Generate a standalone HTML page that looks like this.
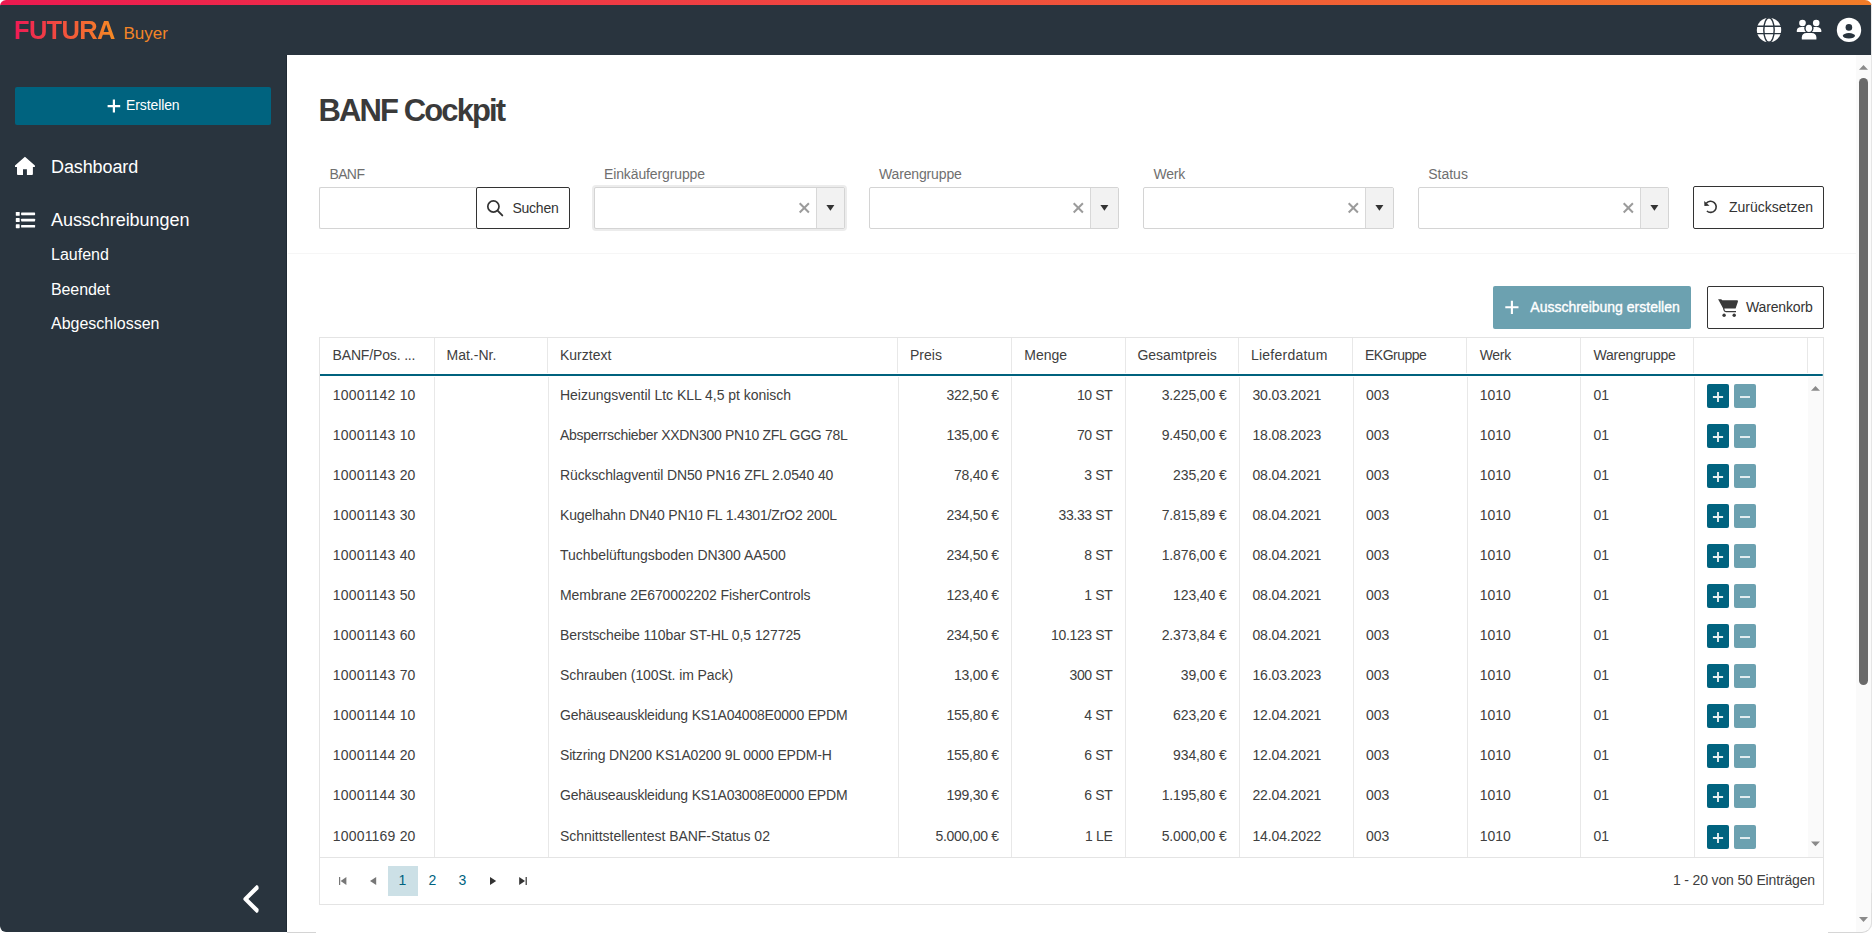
<!DOCTYPE html>
<html><head><meta charset="utf-8">
<style>
*{box-sizing:border-box;margin:0;padding:0}
html,body{width:1872px;height:933px;overflow:hidden;background:#fff;font-family:"Liberation Sans",sans-serif;color:#333}
#frame{position:absolute;left:0;top:0;width:1872px;height:933px;overflow:hidden;border-radius:6px 7px 10px 6px;background:#fff}
.t{position:absolute;white-space:nowrap}
.r{position:absolute}
svg{position:absolute;left:0;top:0;overflow:visible}
</style></head><body>
<div id="frame">
<div class="r" style="left:0;top:0;width:1872px;height:5px;background:linear-gradient(90deg,#ec1a50 0%,#ef4c3e 50%,#f17c28 100%)"></div>
<div class="r" style="left:0;top:5px;width:1871px;height:50px;background:#29343e"></div>
<div class="r" style="left:0;top:55px;width:287px;height:877px;background:#29343e;border-bottom-left-radius:6px"></div>
<div class="r" style="left:286px;top:55px;width:1px;height:877px;background:#1f2a34"></div>
<div class="t" style="left:14.00px;top:18.01px;font-size:25.5px;line-height:25.5px;color:transparent;font-weight:700;letter-spacing:-0.7px;background:linear-gradient(90deg,#ee1a55,#f68b24);-webkit-background-clip:text;background-clip:text;">FUTURA</div>
<div class="t" style="left:123.50px;top:25.21px;font-size:17px;line-height:17px;color:#f38527;">Buyer</div>
<div class="r" style="left:15px;top:87px;width:256px;height:38px;background:#00637f;border-radius:2px"></div>
<svg width="1872" height="933"><path d="M107.6 106.1H120.2M113.9 99.6V112.6" stroke="#fff" stroke-width="2.2"/></svg>
<div class="t" style="left:126.10px;top:98.25px;font-size:14px;line-height:14px;color:#fff;letter-spacing:-0.12px;">Erstellen</div>
<svg width="1872" height="933"><path d="M24.95 156.7L34.9 165.6V167.1H32.9V174Q32.9 174.9 32 174.9H26.9V169.3H23V174.9H17.9Q17 174.9 17 174V167.1H15V165.6Z" fill="#fff"/><rect x="15.8" y="211.9" width="3.9" height="3.9" rx="0.6" fill="#fff"/><rect x="15.8" y="218.1" width="3.9" height="3.9" rx="0.6" fill="#fff"/><rect x="15.8" y="224.3" width="3.9" height="3.9" rx="0.6" fill="#fff"/><rect x="21.1" y="212.5" width="14" height="2.7" rx="0.6" fill="#fff"/><rect x="21.1" y="218.7" width="14" height="2.7" rx="0.6" fill="#fff"/><rect x="21.1" y="224.9" width="14" height="2.7" rx="0.6" fill="#fff"/><path d="M256.6 884.9Q258.6 885.2 258.6 887.2V888.9L248.4 899L258.6 909.1V910.8Q258.6 912.8 256.6 913.1L243.8 900.3Q242.8 899 243.8 897.7Z" fill="#fff"/></svg>
<div class="t" style="left:51.00px;top:157.56px;font-size:18px;line-height:18px;color:#fff;letter-spacing:-0.1px;">Dashboard</div>
<div class="t" style="left:51.00px;top:210.66px;font-size:18px;line-height:18px;color:#fff;letter-spacing:-0.05px;">Ausschreibungen</div>
<div class="t" style="left:51.00px;top:247.46px;font-size:16px;line-height:16px;color:#fff;">Laufend</div>
<div class="t" style="left:51.00px;top:282.46px;font-size:16px;line-height:16px;color:#fff;letter-spacing:-0.1px;">Beendet</div>
<div class="t" style="left:51.00px;top:316.46px;font-size:16px;line-height:16px;color:#fff;">Abgeschlossen</div>
<svg width="1872" height="933"><circle cx="1769" cy="30" r="12.2" fill="#fff"/><path d="M1756 26.2H1782M1756 33.6H1782" stroke="#29343e" stroke-width="1.4"/><ellipse cx="1769" cy="30" rx="5.2" ry="12.3" fill="none" stroke="#29343e" stroke-width="1.4"/><circle cx="1802.5" cy="23" r="3.3" fill="#fff"/><circle cx="1816.2" cy="23" r="3.3" fill="#fff"/><path d="M1796.8 32V30.5Q1797 27 1801.5 27H1803.5Q1808 27 1808.2 30.5V32Z" fill="#fff"/><path d="M1809.8 32V30.5Q1810 27 1814.5 27H1816.5Q1821 27 1821.3 30.5V32Z" fill="#fff"/><ellipse cx="1808.9" cy="28.3" rx="4.6" ry="5" fill="#29343e"/><ellipse cx="1808.9" cy="28.3" rx="3.2" ry="3.6" fill="#fff"/><path d="M1801.8 39.4V37.5Q1802 32.9 1806.5 32.9H1811.5Q1816.2 32.9 1816.4 37.5V39.4Z" fill="#fff" stroke="#29343e" stroke-width="0"/><circle cx="1849" cy="29.9" r="12.2" fill="#fff"/><circle cx="1848.9" cy="27.4" r="3.3" fill="#29343e"/><ellipse cx="1848.9" cy="35.8" rx="6.1" ry="2.7" fill="#29343e"/></svg>
<div class="r" style="left:1856px;top:55px;width:15px;height:878px;background:#fafafa"></div>
<div class="r" style="left:1859px;top:78px;width:9px;height:607px;background:#6a6a6a;border-radius:4.5px"></div>
<svg width="1872" height="933"><path d="M1859 69.8L1863.5 65L1868 69.8Z" fill="#8a8a8a"/><path d="M1859 917L1863.5 921.9L1868 917Z" fill="#8a8a8a"/></svg>
<div class="r" style="left:1871px;top:0;width:1px;height:933px;background:#e6e6e6"></div>
<div class="t" style="left:318.60px;top:94.61px;font-size:31px;line-height:31px;color:#3a3a3a;font-weight:700;letter-spacing:-1.9px;">BANF Cockpit</div>
<div class="t" style="left:329.40px;top:167.05px;font-size:14px;line-height:14px;color:#6f6f6f;letter-spacing:-0.6px;">BANF</div>
<div class="t" style="left:604.00px;top:167.05px;font-size:14px;line-height:14px;color:#6f6f6f;letter-spacing:-0.12px;">Einkäufergruppe</div>
<div class="t" style="left:879.00px;top:167.05px;font-size:14px;line-height:14px;color:#6f6f6f;letter-spacing:-0.15px;">Warengruppe</div>
<div class="t" style="left:1153.50px;top:167.05px;font-size:14px;line-height:14px;color:#6f6f6f;letter-spacing:-0.2px;">Werk</div>
<div class="t" style="left:1428.20px;top:167.05px;font-size:14px;line-height:14px;color:#6f6f6f;">Status</div>
<div class="r" style="left:319px;top:187px;width:158px;height:42px;border:1px solid #d4d4d4;border-right:none;border-radius:2px 0 0 2px;background:#fff"></div>
<div class="r" style="left:476px;top:187px;width:94px;height:42px;border:1px solid #333;border-radius:2px;background:#fff"></div>
<svg width="1872" height="933"><circle cx="493.4" cy="206.5" r="5.6" fill="none" stroke="#333" stroke-width="1.7"/><path d="M497.6 210.7L502.3 215.4" stroke="#333" stroke-width="1.9" stroke-linecap="round"/></svg>
<div class="t" style="left:512.50px;top:200.95px;font-size:14px;line-height:14px;color:#333;letter-spacing:-0.25px;">Suchen</div>
<div class="r" style="left:594px;top:187px;width:251px;height:42px;border:1px solid #d4d4d4;border-radius:2px;background:#fff;box-shadow:0 0 0 2px #ececec;"></div>
<div class="r" style="left:816px;top:188px;width:28px;height:40px;background:#f2f2f2;border-left:1px solid #d8d8d8"></div>
<svg width="1872" height="933"><path d="M799.6999999999999 203.3L808.9 212.5M808.9 203.3L799.6999999999999 212.5" stroke="#9b9b9b" stroke-width="2"/><path d="M826.4 205L834.4 205L830.4 210.7Z" fill="#333"/></svg>
<div class="r" style="left:869px;top:187px;width:250px;height:42px;border:1px solid #d4d4d4;border-radius:2px;background:#fff;"></div>
<div class="r" style="left:1090px;top:188px;width:28px;height:40px;background:#f2f2f2;border-left:1px solid #d8d8d8"></div>
<svg width="1872" height="933"><path d="M1073.7 203.3L1082.8999999999999 212.5M1082.8999999999999 203.3L1073.7 212.5" stroke="#9b9b9b" stroke-width="2"/><path d="M1100.4 205L1108.4 205L1104.4 210.7Z" fill="#333"/></svg>
<div class="r" style="left:1143px;top:187px;width:251px;height:42px;border:1px solid #d4d4d4;border-radius:2px;background:#fff;"></div>
<div class="r" style="left:1365px;top:188px;width:28px;height:40px;background:#f2f2f2;border-left:1px solid #d8d8d8"></div>
<svg width="1872" height="933"><path d="M1348.7 203.3L1357.8999999999999 212.5M1357.8999999999999 203.3L1348.7 212.5" stroke="#9b9b9b" stroke-width="2"/><path d="M1375.4 205L1383.4 205L1379.4 210.7Z" fill="#333"/></svg>
<div class="r" style="left:1418px;top:187px;width:251px;height:42px;border:1px solid #d4d4d4;border-radius:2px;background:#fff;"></div>
<div class="r" style="left:1640px;top:188px;width:28px;height:40px;background:#f2f2f2;border-left:1px solid #d8d8d8"></div>
<svg width="1872" height="933"><path d="M1623.7 203.3L1632.8999999999999 212.5M1632.8999999999999 203.3L1623.7 212.5" stroke="#9b9b9b" stroke-width="2"/><path d="M1650.4 205L1658.4 205L1654.4 210.7Z" fill="#333"/></svg>
<div class="r" style="left:1693px;top:186px;width:131px;height:43px;border:1px solid #333;border-radius:2px;background:#fff"></div>
<svg width="1872" height="933"><path d="M1706.3 203.2A5.6 5.6 0 1 1 1706.9 211" fill="none" stroke="#333" stroke-width="1.6"/><path d="M1704.2 200.9L1704.4 206L1709.5 205.7Z" fill="#333"/></svg>
<div class="t" style="left:1729.00px;top:199.75px;font-size:14px;line-height:14px;color:#333;">Zurücksetzen</div>
<div class="r" style="left:288px;top:253px;width:1568px;height:1px;background:#f6f6f6"></div>
<div class="r" style="left:1493px;top:286px;width:198px;height:43px;background:#6ca1b0;border-radius:2px"></div>
<svg width="1872" height="933"><path d="M1505.3 307.3H1518.5M1511.9 300.7V313.9" stroke="#fff" stroke-width="2.1"/></svg>
<div class="t" style="left:1530.30px;top:300.45px;font-size:14px;line-height:14px;color:#fff;-webkit-text-stroke:0.35px #fff;">Ausschreibung erstellen</div>
<div class="r" style="left:1707px;top:286px;width:117px;height:43px;border:1px solid #333;border-radius:2px;background:#fff"></div>
<svg width="1872" height="933"><path d="M1718.1 299.2H1721.2L1722.3 300.2H1737.2Q1738.4 300.5 1737.9 301.8L1735.6 308.6H1723.2Z" fill="#3a3a3a"/><path d="M1722.6 301L1724 310Q1724.3 311.6 1726 311.6H1736" fill="none" stroke="#3a3a3a" stroke-width="1.3"/><circle cx="1724.1" cy="315.2" r="1.7" fill="#3a3a3a"/><circle cx="1734.2" cy="315.2" r="1.7" fill="#3a3a3a"/></svg>
<div class="t" style="left:1746.00px;top:299.95px;font-size:14px;line-height:14px;color:#333;letter-spacing:-0.15px;">Warenkorb</div>
<div class="r" style="left:319px;top:337px;width:1505px;height:568px;border:1px solid #e4e4e4;background:#fff"></div>
<div class="r" style="left:1808px;top:377px;width:15px;height:480px;background:#fafafa"></div>
<div class="r" style="left:434px;top:338px;width:1px;height:35px;background:#e8e8e8"></div>
<div class="r" style="left:547px;top:338px;width:1px;height:35px;background:#e8e8e8"></div>
<div class="r" style="left:897px;top:338px;width:1px;height:35px;background:#e8e8e8"></div>
<div class="r" style="left:1011px;top:338px;width:1px;height:35px;background:#e8e8e8"></div>
<div class="r" style="left:1125px;top:338px;width:1px;height:35px;background:#e8e8e8"></div>
<div class="r" style="left:1238px;top:338px;width:1px;height:35px;background:#e8e8e8"></div>
<div class="r" style="left:1352px;top:338px;width:1px;height:35px;background:#e8e8e8"></div>
<div class="r" style="left:1466px;top:338px;width:1px;height:35px;background:#e8e8e8"></div>
<div class="r" style="left:1580px;top:338px;width:1px;height:35px;background:#e8e8e8"></div>
<div class="r" style="left:1693px;top:338px;width:1px;height:35px;background:#e8e8e8"></div>
<div class="r" style="left:1807px;top:338px;width:1px;height:35px;background:#e8e8e8"></div>
<div class="r" style="left:434px;top:377px;width:1px;height:480px;background:#e8e8e8"></div>
<div class="r" style="left:548px;top:377px;width:1px;height:480px;background:#e8e8e8"></div>
<div class="r" style="left:898px;top:377px;width:1px;height:480px;background:#e8e8e8"></div>
<div class="r" style="left:1011px;top:377px;width:1px;height:480px;background:#e8e8e8"></div>
<div class="r" style="left:1125px;top:377px;width:1px;height:480px;background:#e8e8e8"></div>
<div class="r" style="left:1239px;top:377px;width:1px;height:480px;background:#e8e8e8"></div>
<div class="r" style="left:1353px;top:377px;width:1px;height:480px;background:#e8e8e8"></div>
<div class="r" style="left:1467px;top:377px;width:1px;height:480px;background:#e8e8e8"></div>
<div class="r" style="left:1580px;top:377px;width:1px;height:480px;background:#e8e8e8"></div>
<div class="r" style="left:1694px;top:377px;width:1px;height:480px;background:#e8e8e8"></div>
<div class="r" style="left:320px;top:374px;width:1503px;height:2px;background:#00627e;border-radius:0 1px 1px 0"></div>
<div class="r" style="left:320px;top:857px;width:1503px;height:1px;background:#e4e4e4"></div>
<div class="t" style="left:332.50px;top:348.45px;font-size:14px;line-height:14px;color:#404040;letter-spacing:-0.15px;">BANF/Pos. ...</div>
<div class="t" style="left:446.50px;top:348.45px;font-size:14px;line-height:14px;color:#404040;">Mat.-Nr.</div>
<div class="t" style="left:560.00px;top:348.45px;font-size:14px;line-height:14px;color:#404040;">Kurztext</div>
<div class="t" style="left:910.00px;top:348.45px;font-size:14px;line-height:14px;color:#404040;">Preis</div>
<div class="t" style="left:1024.30px;top:348.45px;font-size:14px;line-height:14px;color:#404040;">Menge</div>
<div class="t" style="left:1137.40px;top:348.45px;font-size:14px;line-height:14px;color:#404040;">Gesamtpreis</div>
<div class="t" style="left:1250.90px;top:348.45px;font-size:14px;line-height:14px;color:#404040;letter-spacing:0.25px;">Lieferdatum</div>
<div class="t" style="left:1365.00px;top:348.45px;font-size:14px;line-height:14px;color:#404040;letter-spacing:-0.5px;">EKGruppe</div>
<div class="t" style="left:1479.70px;top:348.45px;font-size:14px;line-height:14px;color:#404040;letter-spacing:-0.3px;">Werk</div>
<div class="t" style="left:1593.40px;top:348.45px;font-size:14px;line-height:14px;color:#404040;letter-spacing:-0.18px;">Warengruppe</div>
<div class="t" style="left:332.70px;top:388.15px;font-size:14px;line-height:14px;color:#404040;letter-spacing:0.2px;">10001142 10</div>
<div class="t" style="left:560.00px;top:388.15px;font-size:14px;line-height:14px;color:#404040;letter-spacing:-0.03px;">Heizungsventil Ltc KLL 4,5 pt konisch</div>
<div class="t" style="right:873.30px;top:388.15px;font-size:14px;line-height:14px;color:#404040;letter-spacing:-0.3px;">322,50 €</div>
<div class="t" style="right:759.50px;top:388.15px;font-size:14px;line-height:14px;color:#404040;letter-spacing:-0.35px;">10 ST</div>
<div class="t" style="right:645.40px;top:388.15px;font-size:14px;line-height:14px;color:#404040;letter-spacing:-0.12px;">3.225,00 €</div>
<div class="t" style="left:1252.40px;top:388.15px;font-size:14px;line-height:14px;color:#404040;letter-spacing:-0.12px;">30.03.2021</div>
<div class="t" style="left:1366.00px;top:388.15px;font-size:14px;line-height:14px;color:#404040;">003</div>
<div class="t" style="left:1479.70px;top:388.15px;font-size:14px;line-height:14px;color:#404040;">1010</div>
<div class="t" style="left:1593.40px;top:388.15px;font-size:14px;line-height:14px;color:#404040;">01</div>
<div class="r" style="left:1707px;top:384px;width:22px;height:23.5px;background:#00637f;border-radius:2px"></div>
<div class="r" style="left:1734px;top:384px;width:22px;height:23.5px;background:#6ca1b0;border-radius:2px"></div>
<svg width="1872" height="933"><path d="M1712.9 397H1723.1M1718 392.1V401.9" stroke="#e8f0f2" stroke-width="1.9"/><path d="M1740 397H1750" stroke="#e8f0f2" stroke-width="1.9"/></svg>
<div class="t" style="left:332.70px;top:428.15px;font-size:14px;line-height:14px;color:#404040;letter-spacing:0.2px;">10001143 10</div>
<div class="t" style="left:560.00px;top:428.15px;font-size:14px;line-height:14px;color:#404040;letter-spacing:-0.29000000000000004px;">Absperrschieber XXDN300 PN10 ZFL GGG 78L</div>
<div class="t" style="right:873.30px;top:428.15px;font-size:14px;line-height:14px;color:#404040;letter-spacing:-0.3px;">135,00 €</div>
<div class="t" style="right:759.50px;top:428.15px;font-size:14px;line-height:14px;color:#404040;letter-spacing:-0.35px;">70 ST</div>
<div class="t" style="right:645.40px;top:428.15px;font-size:14px;line-height:14px;color:#404040;letter-spacing:-0.12px;">9.450,00 €</div>
<div class="t" style="left:1252.40px;top:428.15px;font-size:14px;line-height:14px;color:#404040;letter-spacing:-0.12px;">18.08.2023</div>
<div class="t" style="left:1366.00px;top:428.15px;font-size:14px;line-height:14px;color:#404040;">003</div>
<div class="t" style="left:1479.70px;top:428.15px;font-size:14px;line-height:14px;color:#404040;">1010</div>
<div class="t" style="left:1593.40px;top:428.15px;font-size:14px;line-height:14px;color:#404040;">01</div>
<div class="r" style="left:1707px;top:424px;width:22px;height:23.5px;background:#00637f;border-radius:2px"></div>
<div class="r" style="left:1734px;top:424px;width:22px;height:23.5px;background:#6ca1b0;border-radius:2px"></div>
<svg width="1872" height="933"><path d="M1712.9 437H1723.1M1718 432.1V441.9" stroke="#e8f0f2" stroke-width="1.9"/><path d="M1740 437H1750" stroke="#e8f0f2" stroke-width="1.9"/></svg>
<div class="t" style="left:332.70px;top:468.15px;font-size:14px;line-height:14px;color:#404040;letter-spacing:0.2px;">10001143 20</div>
<div class="t" style="left:560.00px;top:468.15px;font-size:14px;line-height:14px;color:#404040;letter-spacing:-0.12px;">Rückschlagventil DN50 PN16 ZFL 2.0540 40</div>
<div class="t" style="right:873.30px;top:468.15px;font-size:14px;line-height:14px;color:#404040;letter-spacing:-0.3px;">78,40 €</div>
<div class="t" style="right:759.50px;top:468.15px;font-size:14px;line-height:14px;color:#404040;letter-spacing:-0.35px;">3 ST</div>
<div class="t" style="right:645.40px;top:468.15px;font-size:14px;line-height:14px;color:#404040;letter-spacing:-0.12px;">235,20 €</div>
<div class="t" style="left:1252.40px;top:468.15px;font-size:14px;line-height:14px;color:#404040;letter-spacing:-0.12px;">08.04.2021</div>
<div class="t" style="left:1366.00px;top:468.15px;font-size:14px;line-height:14px;color:#404040;">003</div>
<div class="t" style="left:1479.70px;top:468.15px;font-size:14px;line-height:14px;color:#404040;">1010</div>
<div class="t" style="left:1593.40px;top:468.15px;font-size:14px;line-height:14px;color:#404040;">01</div>
<div class="r" style="left:1707px;top:464px;width:22px;height:23.5px;background:#00637f;border-radius:2px"></div>
<div class="r" style="left:1734px;top:464px;width:22px;height:23.5px;background:#6ca1b0;border-radius:2px"></div>
<svg width="1872" height="933"><path d="M1712.9 477H1723.1M1718 472.1V481.9" stroke="#e8f0f2" stroke-width="1.9"/><path d="M1740 477H1750" stroke="#e8f0f2" stroke-width="1.9"/></svg>
<div class="t" style="left:332.70px;top:508.15px;font-size:14px;line-height:14px;color:#404040;letter-spacing:0.2px;">10001143 30</div>
<div class="t" style="left:560.00px;top:508.15px;font-size:14px;line-height:14px;color:#404040;letter-spacing:-0.15px;">Kugelhahn DN40 PN10 FL 1.4301/ZrO2 200L</div>
<div class="t" style="right:873.30px;top:508.15px;font-size:14px;line-height:14px;color:#404040;letter-spacing:-0.3px;">234,50 €</div>
<div class="t" style="right:759.50px;top:508.15px;font-size:14px;line-height:14px;color:#404040;letter-spacing:-0.35px;">33.33 ST</div>
<div class="t" style="right:645.40px;top:508.15px;font-size:14px;line-height:14px;color:#404040;letter-spacing:-0.12px;">7.815,89 €</div>
<div class="t" style="left:1252.40px;top:508.15px;font-size:14px;line-height:14px;color:#404040;letter-spacing:-0.12px;">08.04.2021</div>
<div class="t" style="left:1366.00px;top:508.15px;font-size:14px;line-height:14px;color:#404040;">003</div>
<div class="t" style="left:1479.70px;top:508.15px;font-size:14px;line-height:14px;color:#404040;">1010</div>
<div class="t" style="left:1593.40px;top:508.15px;font-size:14px;line-height:14px;color:#404040;">01</div>
<div class="r" style="left:1707px;top:504px;width:22px;height:23.5px;background:#00637f;border-radius:2px"></div>
<div class="r" style="left:1734px;top:504px;width:22px;height:23.5px;background:#6ca1b0;border-radius:2px"></div>
<svg width="1872" height="933"><path d="M1712.9 517H1723.1M1718 512.1V521.9" stroke="#e8f0f2" stroke-width="1.9"/><path d="M1740 517H1750" stroke="#e8f0f2" stroke-width="1.9"/></svg>
<div class="t" style="left:332.70px;top:548.15px;font-size:14px;line-height:14px;color:#404040;letter-spacing:0.2px;">10001143 40</div>
<div class="t" style="left:560.00px;top:548.15px;font-size:14px;line-height:14px;color:#404040;letter-spacing:-0.03px;">Tuchbelüftungsboden DN300 AA500</div>
<div class="t" style="right:873.30px;top:548.15px;font-size:14px;line-height:14px;color:#404040;letter-spacing:-0.3px;">234,50 €</div>
<div class="t" style="right:759.50px;top:548.15px;font-size:14px;line-height:14px;color:#404040;letter-spacing:-0.35px;">8 ST</div>
<div class="t" style="right:645.40px;top:548.15px;font-size:14px;line-height:14px;color:#404040;letter-spacing:-0.12px;">1.876,00 €</div>
<div class="t" style="left:1252.40px;top:548.15px;font-size:14px;line-height:14px;color:#404040;letter-spacing:-0.12px;">08.04.2021</div>
<div class="t" style="left:1366.00px;top:548.15px;font-size:14px;line-height:14px;color:#404040;">003</div>
<div class="t" style="left:1479.70px;top:548.15px;font-size:14px;line-height:14px;color:#404040;">1010</div>
<div class="t" style="left:1593.40px;top:548.15px;font-size:14px;line-height:14px;color:#404040;">01</div>
<div class="r" style="left:1707px;top:544px;width:22px;height:23.5px;background:#00637f;border-radius:2px"></div>
<div class="r" style="left:1734px;top:544px;width:22px;height:23.5px;background:#6ca1b0;border-radius:2px"></div>
<svg width="1872" height="933"><path d="M1712.9 557H1723.1M1718 552.1V561.9" stroke="#e8f0f2" stroke-width="1.9"/><path d="M1740 557H1750" stroke="#e8f0f2" stroke-width="1.9"/></svg>
<div class="t" style="left:332.70px;top:588.15px;font-size:14px;line-height:14px;color:#404040;letter-spacing:0.2px;">10001143 50</div>
<div class="t" style="left:560.00px;top:588.15px;font-size:14px;line-height:14px;color:#404040;letter-spacing:-0.07px;">Membrane 2E670002202 FisherControls</div>
<div class="t" style="right:873.30px;top:588.15px;font-size:14px;line-height:14px;color:#404040;letter-spacing:-0.3px;">123,40 €</div>
<div class="t" style="right:759.50px;top:588.15px;font-size:14px;line-height:14px;color:#404040;letter-spacing:-0.35px;">1 ST</div>
<div class="t" style="right:645.40px;top:588.15px;font-size:14px;line-height:14px;color:#404040;letter-spacing:-0.12px;">123,40 €</div>
<div class="t" style="left:1252.40px;top:588.15px;font-size:14px;line-height:14px;color:#404040;letter-spacing:-0.12px;">08.04.2021</div>
<div class="t" style="left:1366.00px;top:588.15px;font-size:14px;line-height:14px;color:#404040;">003</div>
<div class="t" style="left:1479.70px;top:588.15px;font-size:14px;line-height:14px;color:#404040;">1010</div>
<div class="t" style="left:1593.40px;top:588.15px;font-size:14px;line-height:14px;color:#404040;">01</div>
<div class="r" style="left:1707px;top:584px;width:22px;height:23.5px;background:#00637f;border-radius:2px"></div>
<div class="r" style="left:1734px;top:584px;width:22px;height:23.5px;background:#6ca1b0;border-radius:2px"></div>
<svg width="1872" height="933"><path d="M1712.9 597H1723.1M1718 592.1V601.9" stroke="#e8f0f2" stroke-width="1.9"/><path d="M1740 597H1750" stroke="#e8f0f2" stroke-width="1.9"/></svg>
<div class="t" style="left:332.70px;top:628.15px;font-size:14px;line-height:14px;color:#404040;letter-spacing:0.2px;">10001143 60</div>
<div class="t" style="left:560.00px;top:628.15px;font-size:14px;line-height:14px;color:#404040;letter-spacing:-0.1px;">Berstscheibe 110bar ST-HL 0,5 127725</div>
<div class="t" style="right:873.30px;top:628.15px;font-size:14px;line-height:14px;color:#404040;letter-spacing:-0.3px;">234,50 €</div>
<div class="t" style="right:759.50px;top:628.15px;font-size:14px;line-height:14px;color:#404040;letter-spacing:-0.35px;">10.123 ST</div>
<div class="t" style="right:645.40px;top:628.15px;font-size:14px;line-height:14px;color:#404040;letter-spacing:-0.12px;">2.373,84 €</div>
<div class="t" style="left:1252.40px;top:628.15px;font-size:14px;line-height:14px;color:#404040;letter-spacing:-0.12px;">08.04.2021</div>
<div class="t" style="left:1366.00px;top:628.15px;font-size:14px;line-height:14px;color:#404040;">003</div>
<div class="t" style="left:1479.70px;top:628.15px;font-size:14px;line-height:14px;color:#404040;">1010</div>
<div class="t" style="left:1593.40px;top:628.15px;font-size:14px;line-height:14px;color:#404040;">01</div>
<div class="r" style="left:1707px;top:624px;width:22px;height:23.5px;background:#00637f;border-radius:2px"></div>
<div class="r" style="left:1734px;top:624px;width:22px;height:23.5px;background:#6ca1b0;border-radius:2px"></div>
<svg width="1872" height="933"><path d="M1712.9 637H1723.1M1718 632.1V641.9" stroke="#e8f0f2" stroke-width="1.9"/><path d="M1740 637H1750" stroke="#e8f0f2" stroke-width="1.9"/></svg>
<div class="t" style="left:332.70px;top:668.15px;font-size:14px;line-height:14px;color:#404040;letter-spacing:0.2px;">10001143 70</div>
<div class="t" style="left:560.00px;top:668.15px;font-size:14px;line-height:14px;color:#404040;letter-spacing:-0.08px;">Schrauben (100St. im Pack)</div>
<div class="t" style="right:873.30px;top:668.15px;font-size:14px;line-height:14px;color:#404040;letter-spacing:-0.3px;">13,00 €</div>
<div class="t" style="right:759.50px;top:668.15px;font-size:14px;line-height:14px;color:#404040;letter-spacing:-0.35px;">300 ST</div>
<div class="t" style="right:645.40px;top:668.15px;font-size:14px;line-height:14px;color:#404040;letter-spacing:-0.12px;">39,00 €</div>
<div class="t" style="left:1252.40px;top:668.15px;font-size:14px;line-height:14px;color:#404040;letter-spacing:-0.12px;">16.03.2023</div>
<div class="t" style="left:1366.00px;top:668.15px;font-size:14px;line-height:14px;color:#404040;">003</div>
<div class="t" style="left:1479.70px;top:668.15px;font-size:14px;line-height:14px;color:#404040;">1010</div>
<div class="t" style="left:1593.40px;top:668.15px;font-size:14px;line-height:14px;color:#404040;">01</div>
<div class="r" style="left:1707px;top:664px;width:22px;height:23.5px;background:#00637f;border-radius:2px"></div>
<div class="r" style="left:1734px;top:664px;width:22px;height:23.5px;background:#6ca1b0;border-radius:2px"></div>
<svg width="1872" height="933"><path d="M1712.9 677H1723.1M1718 672.1V681.9" stroke="#e8f0f2" stroke-width="1.9"/><path d="M1740 677H1750" stroke="#e8f0f2" stroke-width="1.9"/></svg>
<div class="t" style="left:332.70px;top:708.15px;font-size:14px;line-height:14px;color:#404040;letter-spacing:0.2px;">10001144 10</div>
<div class="t" style="left:560.00px;top:708.15px;font-size:14px;line-height:14px;color:#404040;letter-spacing:-0.2px;">Gehäuseauskleidung KS1A04008E0000 EPDM</div>
<div class="t" style="right:873.30px;top:708.15px;font-size:14px;line-height:14px;color:#404040;letter-spacing:-0.3px;">155,80 €</div>
<div class="t" style="right:759.50px;top:708.15px;font-size:14px;line-height:14px;color:#404040;letter-spacing:-0.35px;">4 ST</div>
<div class="t" style="right:645.40px;top:708.15px;font-size:14px;line-height:14px;color:#404040;letter-spacing:-0.12px;">623,20 €</div>
<div class="t" style="left:1252.40px;top:708.15px;font-size:14px;line-height:14px;color:#404040;letter-spacing:-0.12px;">12.04.2021</div>
<div class="t" style="left:1366.00px;top:708.15px;font-size:14px;line-height:14px;color:#404040;">003</div>
<div class="t" style="left:1479.70px;top:708.15px;font-size:14px;line-height:14px;color:#404040;">1010</div>
<div class="t" style="left:1593.40px;top:708.15px;font-size:14px;line-height:14px;color:#404040;">01</div>
<div class="r" style="left:1707px;top:704px;width:22px;height:23.5px;background:#00637f;border-radius:2px"></div>
<div class="r" style="left:1734px;top:704px;width:22px;height:23.5px;background:#6ca1b0;border-radius:2px"></div>
<svg width="1872" height="933"><path d="M1712.9 717H1723.1M1718 712.1V721.9" stroke="#e8f0f2" stroke-width="1.9"/><path d="M1740 717H1750" stroke="#e8f0f2" stroke-width="1.9"/></svg>
<div class="t" style="left:332.70px;top:748.15px;font-size:14px;line-height:14px;color:#404040;letter-spacing:0.2px;">10001144 20</div>
<div class="t" style="left:560.00px;top:748.15px;font-size:14px;line-height:14px;color:#404040;letter-spacing:-0.17px;">Sitzring DN200 KS1A0200 9L 0000 EPDM-H</div>
<div class="t" style="right:873.30px;top:748.15px;font-size:14px;line-height:14px;color:#404040;letter-spacing:-0.3px;">155,80 €</div>
<div class="t" style="right:759.50px;top:748.15px;font-size:14px;line-height:14px;color:#404040;letter-spacing:-0.35px;">6 ST</div>
<div class="t" style="right:645.40px;top:748.15px;font-size:14px;line-height:14px;color:#404040;letter-spacing:-0.12px;">934,80 €</div>
<div class="t" style="left:1252.40px;top:748.15px;font-size:14px;line-height:14px;color:#404040;letter-spacing:-0.12px;">12.04.2021</div>
<div class="t" style="left:1366.00px;top:748.15px;font-size:14px;line-height:14px;color:#404040;">003</div>
<div class="t" style="left:1479.70px;top:748.15px;font-size:14px;line-height:14px;color:#404040;">1010</div>
<div class="t" style="left:1593.40px;top:748.15px;font-size:14px;line-height:14px;color:#404040;">01</div>
<div class="r" style="left:1707px;top:744px;width:22px;height:23.5px;background:#00637f;border-radius:2px"></div>
<div class="r" style="left:1734px;top:744px;width:22px;height:23.5px;background:#6ca1b0;border-radius:2px"></div>
<svg width="1872" height="933"><path d="M1712.9 757H1723.1M1718 752.1V761.9" stroke="#e8f0f2" stroke-width="1.9"/><path d="M1740 757H1750" stroke="#e8f0f2" stroke-width="1.9"/></svg>
<div class="t" style="left:332.70px;top:788.15px;font-size:14px;line-height:14px;color:#404040;letter-spacing:0.2px;">10001144 30</div>
<div class="t" style="left:560.00px;top:788.15px;font-size:14px;line-height:14px;color:#404040;letter-spacing:-0.2px;">Gehäuseauskleidung KS1A03008E0000 EPDM</div>
<div class="t" style="right:873.30px;top:788.15px;font-size:14px;line-height:14px;color:#404040;letter-spacing:-0.3px;">199,30 €</div>
<div class="t" style="right:759.50px;top:788.15px;font-size:14px;line-height:14px;color:#404040;letter-spacing:-0.35px;">6 ST</div>
<div class="t" style="right:645.40px;top:788.15px;font-size:14px;line-height:14px;color:#404040;letter-spacing:-0.12px;">1.195,80 €</div>
<div class="t" style="left:1252.40px;top:788.15px;font-size:14px;line-height:14px;color:#404040;letter-spacing:-0.12px;">22.04.2021</div>
<div class="t" style="left:1366.00px;top:788.15px;font-size:14px;line-height:14px;color:#404040;">003</div>
<div class="t" style="left:1479.70px;top:788.15px;font-size:14px;line-height:14px;color:#404040;">1010</div>
<div class="t" style="left:1593.40px;top:788.15px;font-size:14px;line-height:14px;color:#404040;">01</div>
<div class="r" style="left:1707px;top:784px;width:22px;height:23.5px;background:#00637f;border-radius:2px"></div>
<div class="r" style="left:1734px;top:784px;width:22px;height:23.5px;background:#6ca1b0;border-radius:2px"></div>
<svg width="1872" height="933"><path d="M1712.9 797H1723.1M1718 792.1V801.9" stroke="#e8f0f2" stroke-width="1.9"/><path d="M1740 797H1750" stroke="#e8f0f2" stroke-width="1.9"/></svg>
<div class="t" style="left:332.70px;top:829.15px;font-size:14px;line-height:14px;color:#404040;letter-spacing:0.2px;">10001169 20</div>
<div class="t" style="left:560.00px;top:829.15px;font-size:14px;line-height:14px;color:#404040;letter-spacing:-0.03px;">Schnittstellentest BANF-Status 02</div>
<div class="t" style="right:873.30px;top:829.15px;font-size:14px;line-height:14px;color:#404040;letter-spacing:-0.3px;">5.000,00 €</div>
<div class="t" style="right:759.50px;top:829.15px;font-size:14px;line-height:14px;color:#404040;letter-spacing:-0.35px;">1 LE</div>
<div class="t" style="right:645.40px;top:829.15px;font-size:14px;line-height:14px;color:#404040;letter-spacing:-0.12px;">5.000,00 €</div>
<div class="t" style="left:1252.40px;top:829.15px;font-size:14px;line-height:14px;color:#404040;letter-spacing:-0.12px;">14.04.2022</div>
<div class="t" style="left:1366.00px;top:829.15px;font-size:14px;line-height:14px;color:#404040;">003</div>
<div class="t" style="left:1479.70px;top:829.15px;font-size:14px;line-height:14px;color:#404040;">1010</div>
<div class="t" style="left:1593.40px;top:829.15px;font-size:14px;line-height:14px;color:#404040;">01</div>
<div class="r" style="left:1707px;top:825px;width:22px;height:23.5px;background:#00637f;border-radius:2px"></div>
<div class="r" style="left:1734px;top:825px;width:22px;height:23.5px;background:#6ca1b0;border-radius:2px"></div>
<svg width="1872" height="933"><path d="M1712.9 838H1723.1M1718 833.1V842.9" stroke="#e8f0f2" stroke-width="1.9"/><path d="M1740 838H1750" stroke="#e8f0f2" stroke-width="1.9"/></svg>
<svg width="1872" height="933"><path d="M1811 390.8L1815.5 386L1820 390.8Z" fill="#8a8a8a"/><path d="M1811 841.5L1815.5 846.3L1820 841.5Z" fill="#8a8a8a"/></svg>
<svg width="1872" height="933"><path d="M339.6 876.9V885.1" stroke="#777" stroke-width="1.2"/><path d="M346.4 876.9L340.6 881L346.4 885.1Z" fill="#777"/><path d="M376.2 877L370 881L376.2 885Z" fill="#777"/><path d="M490 877L496.2 881L490 885Z" fill="#333"/><path d="M519.2 876.9L525 881L519.2 885.1Z" fill="#333"/><path d="M526.2 876.9V885.1" stroke="#333" stroke-width="1.2"/></svg>
<div class="r" style="left:388px;top:866px;width:30px;height:30px;background:#cce0e6"></div>
<div class="t" style="left:398.50px;top:873.15px;font-size:14px;line-height:14px;color:#00637f;">1</div>
<div class="t" style="left:428.50px;top:873.15px;font-size:14px;line-height:14px;color:#00637f;">2</div>
<div class="t" style="left:458.50px;top:873.15px;font-size:14px;line-height:14px;color:#00637f;">3</div>
<div class="t" style="right:57.00px;top:873.15px;font-size:14px;line-height:14px;color:#404040;letter-spacing:-0.15px;">1 - 20 von 50 Einträgen</div>
<div class="r" style="left:287px;top:932px;width:29px;height:1px;background:#d4d4d4"></div>
</div>
<div class="r" style="left:1828px;top:893px;width:44px;height:40px;border-right:1px solid #e0e0e0;border-bottom:1px solid #d6d6d6;border-bottom-right-radius:10px"></div>
</body></html>
